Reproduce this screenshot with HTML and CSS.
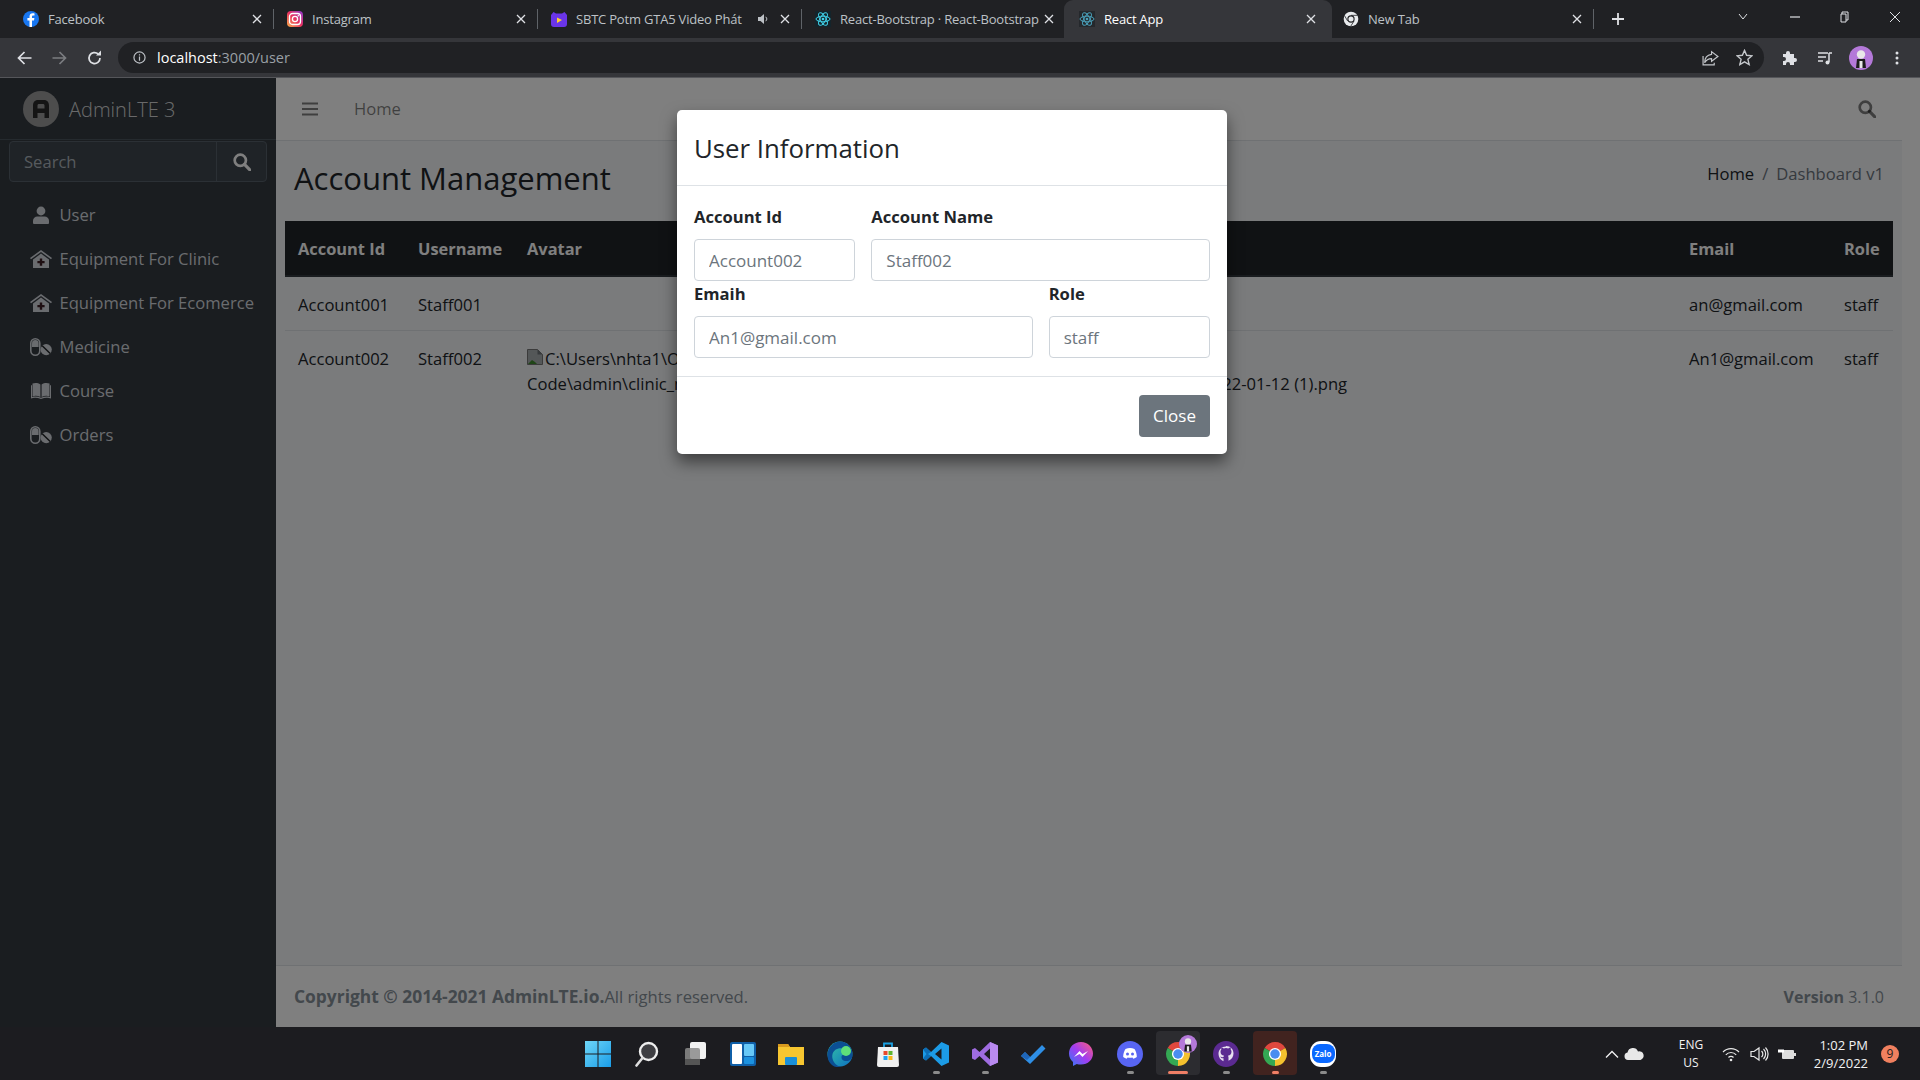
FILE: index.html
```html
<!DOCTYPE html>
<html lang="en">
<head>
    <meta charset="UTF-8">
    <title>React App</title>
    <link rel="stylesheet" href="styles.css">
</head>
<body>
    <svg class="defs" width="0" height="0">
        <defs>
            <symbol id="i-search" viewBox="0 0 16 16"><circle cx="6.5" cy="6.5" r="5" fill="none" stroke="currentColor" stroke-width="2.4"/><path d="M10.2 10.2 15 15" stroke="currentColor" stroke-width="2.8" stroke-linecap="round"/></symbol>
            <symbol id="i-user" viewBox="0 0 18 18"><circle cx="9" cy="5" r="4.4" fill="currentColor"/><path d="M1 17v-2.4C1 12 3 10.4 5.4 10.4h7.2c2.4 0 4.4 1.6 4.4 4.2V17a1 1 0 0 1-1 1H2a1 1 0 0 1-1-1z" fill="currentColor"/></symbol>
            <symbol id="i-clinic" viewBox="0 0 22 18"><path d="M11 0 0 8l1 1.3L11 2l10 7.3L22 8z" fill="currentColor"/><path d="M3 9.6 11 3.6l8 6V18H3z" fill="currentColor"/><path d="M9.8 8.5h2.4v2.4h2.4v2.4h-2.4v2.4H9.8v-2.4H7.4v-2.4h2.4z" fill="#3d1f24"/></symbol>
            <symbol id="i-pills" viewBox="0 0 22 18"><rect x="0.8" y="0.8" width="9" height="16.4" rx="4.5" fill="none" stroke="currentColor" stroke-width="1.6"/><path d="M2 9V5.4a3.3 3.3 0 0 1 6.6 0V9z" fill="currentColor"/><circle cx="16.2" cy="11.6" r="5.6" fill="currentColor"/><path d="M12.2 7.8l8 7.6" stroke="#1a1d20" stroke-width="1.4"/></symbol>
            <symbol id="i-book" viewBox="0 0 22 18"><path d="M2.5 1.5C5 .6 8 .8 10.4 2.4V15C8 13.6 5 13.4 2.5 14.3zM19.5 1.5C17 .6 14 .8 11.6 2.4V15c2.4-1.4 5.4-1.6 7.9-.7z" fill="currentColor"/><path d="M1 3.4v13c3-.8 6.4-.8 10 .6 3.6-1.4 7-1.4 10-.6v-13l-1-.4v12c-3-.8-6-.6-9 .8-3-1.4-6-1.6-9-.8V3z" fill="currentColor"/></symbol>
            <symbol id="i-atom" viewBox="0 0 24 24"><g fill="none" stroke="currentColor" stroke-width="1.5"><ellipse cx="12" cy="12" rx="10.5" ry="4.2"/><ellipse cx="12" cy="12" rx="10.5" ry="4.2" transform="rotate(60 12 12)"/><ellipse cx="12" cy="12" rx="10.5" ry="4.2" transform="rotate(120 12 12)"/></g><circle cx="12" cy="12" r="2" fill="currentColor"/></symbol>
            <symbol id="i-chrome" viewBox="0 0 24 24"><path d="M12 12 2.47 6.5A11 11 0 0 1 21.53 6.5z" fill="#e0483e"/><path d="M12 12 21.53 6.5A11 11 0 0 1 12 23z" fill="#f5c12e"/><path d="M12 12 12 23A11 11 0 0 1 2.47 6.5z" fill="#34a853"/><circle cx="12" cy="12" r="5.6" fill="#fff"/><circle cx="12" cy="12" r="4.4" fill="#4a8df0"/></symbol>
            <symbol id="i-avatar" viewBox="0 0 24 24"><circle cx="12" cy="12" r="12" fill="#b479d9"/><circle cx="12" cy="8.5" r="4.2" fill="#e8e8e8"/><path d="M8 13h8l1 9H7z" fill="#1c1c1c"/><path d="M10.5 15h3v7h-3z" fill="#e8e8e8"/></symbol>
            <symbol id="i-close" viewBox="0 0 10 10"><path d="M1 1l8 8M9 1 1 9" stroke="currentColor" stroke-width="1.3"/></symbol>
        </defs>
    </svg>

    <header class="chrome">
        <div class="tabstrip">
            <div class="tab">
                <svg class="favicon" viewBox="0 0 16 16"><circle cx="8" cy="8" r="8" fill="#1877f2"/><path d="M9 16V9.5h2l.4-2.4H9V5.8c0-.8.3-1.3 1.3-1.3h1.2V2.4C11 2.3 10.3 2.2 9.8 2.2 7.7 2.2 6.5 3.4 6.5 5.500v1.600H4.400v2.400h2.100V16z" fill="#fff"/></svg>
                <span class="tab-title">Facebook</span>
                <svg class="tab-x"><use href="#i-close"/></svg>
            </div>
            <div class="tab">
                <svg class="favicon" viewBox="0 0 16 16"><defs><linearGradient id="ig" x1="0" y1="1" x2="1" y2="0"><stop offset="0" stop-color="#fdb04a"/><stop offset=".5" stop-color="#e8305f"/><stop offset="1" stop-color="#8b3bd0"/></linearGradient></defs><rect width="16" height="16" rx="4" fill="url(#ig)"/><rect x="2.5" y="2.5" width="11" height="11" rx="3" fill="none" stroke="#fff" stroke-width="1.3"/><circle cx="8" cy="8" r="2.6" fill="none" stroke="#fff" stroke-width="1.3"/><circle cx="11.3" cy="4.7" r=".8" fill="#fff"/></svg>
                <span class="tab-title">Instagram</span>
                <svg class="tab-x"><use href="#i-close"/></svg>
            </div>
            <div class="tab">
                <svg class="favicon" viewBox="0 0 16 16"><path d="M2.5 1 5 2.5h6L13.5 1 16 4v9a3 3 0 0 1-3 3H3a3 3 0 0 1-3-3V4z" fill="#6a35e8"/><path d="M6 6.5 11 9l-5 3z" fill="#ffd02e"/></svg>
                <span class="tab-title">SBTC Potm GTA5 Video Phát</span>
                <svg class="tab-sound" viewBox="0 0 12 12"><path d="M1 4h2.5L7 1v10L3.5 8H1z" fill="currentColor"/><path d="M8.8 3.8a3 3 0 0 1 0 4.4" fill="none" stroke="currentColor"/></svg>
                <svg class="tab-x"><use href="#i-close"/></svg>
            </div>
            <div class="tab tab-nosep">
                <svg class="favicon atom-cyan"><use href="#i-atom"/></svg>
                <span class="tab-title">React-Bootstrap · React-Bootstrap</span>
                <svg class="tab-x"><use href="#i-close"/></svg>
            </div>
            <div class="tab tab-active">
                <svg class="favicon atom-dark"><use href="#i-atom"/></svg>
                <span class="tab-title">React App</span>
                <svg class="tab-x"><use href="#i-close"/></svg>
            </div>
            <div class="tab">
                <svg class="favicon newtab-icon" viewBox="0 0 24 24"><circle cx="12" cy="12" r="11" fill="#e8eaed"/><circle cx="12" cy="12" r="5.5" fill="#202124"/><circle cx="12" cy="12" r="3.8" fill="#e8eaed"/><path d="M12 6.5h10M7 15 2 6.5M16.5 15 11.5 23" stroke="#202124" stroke-width="1.2"/></svg>
                <span class="tab-title">New Tab</span>
                <svg class="tab-x"><use href="#i-close"/></svg>
            </div>
            <svg class="tab-plus" viewBox="0 0 12 12"><path d="M6 0v12M0 6h12" stroke="currentColor" stroke-width="1.8"/></svg>
            <div class="winctl">
                <svg class="winctl-btn" viewBox="0 0 50 12"><path d="M21 3l4 5 4-5" fill="none" stroke="currentColor"/></svg>
                <svg class="winctl-btn winctl-gap" viewBox="0 0 50 12"><path d="M20 6h10" stroke="currentColor" stroke-width="1.2"/></svg>
                <svg class="winctl-btn" viewBox="0 0 50 12"><path d="M22 3V1h6v8h-2M21 3h5v8h-5z" fill="none" stroke="currentColor"/></svg>
                <svg class="winctl-btn" viewBox="0 0 50 12"><path d="M20 1l10 10M30 1 20 11" stroke="currentColor"/></svg>
            </div>
        </div>
        <div class="toolbar">
            <svg class="tool" viewBox="0 0 16 16"><path d="M15 8H2M8 2 2 8l6 6" fill="none" stroke="currentColor" stroke-width="1.7"/></svg>
            <svg class="tool tool-off" viewBox="0 0 16 16"><path d="M1 8h13M8 2l6 6-6 6" fill="none" stroke="currentColor" stroke-width="1.7"/></svg>
            <svg class="tool" viewBox="0 0 16 16"><path d="M13.5 8A5.500 5.500 0 1 1 11.700 4" fill="none" stroke="currentColor" stroke-width="1.7"/><path d="M9.5 5.500H14.500V.5z" fill="currentColor"/></svg>
            <div class="omnibox">
                <svg class="omni-info" viewBox="0 0 14 14"><circle cx="7" cy="7" r="6" fill="none" stroke="currentColor" stroke-width="1.3"/><path d="M7 6v4.500M7 3.500v1.400" stroke="currentColor" stroke-width="1.3"/></svg>
                <span class="omni-url">localhost<span class="omni-path">:3000/user</span></span>
                <svg class="omni-btn" viewBox="0 0 16 16"><path d="M9 2.500 15 7l-6 4.500V9C6 9 4 10 2.500 13c0-4 2-7.500 6.500-8z" fill="none" stroke="currentColor" stroke-width="1.1"/><path d="M1 6.500V15h10.500v-2" fill="none" stroke="currentColor" stroke-width="1.1"/></svg>
                <svg class="omni-btn" viewBox="0 0 16 16"><path d="M8 1.300l2 4.600 5 .5-3.800 3.300 1.200 4.900L8 12.100l-4.400 2.500 1.200-4.900L1 6.400l5-.5z" fill="none" stroke="currentColor" stroke-width="1.3"/></svg>
            </div>
            <svg class="tool tool-ext" viewBox="0 0 16 16"><path d="M2 4h3V3a2 2 0 0 1 4 0v1h4v4h1a2 2 0 0 1 0 4h-1v3H9v-1a2 2 0 0 0-4 0v1H2v-4h1a2 2 0 0 0 0-4H2z" fill="currentColor"/></svg>
            <svg class="tool tool-ext" viewBox="0 0 16 16"><path d="M1 3h10M1 7h8M1 11h5" stroke="currentColor" stroke-width="1.5"/><path d="M12 3h3M12 3v9" stroke="currentColor" stroke-width="1.5"/><circle cx="10.5" cy="12.5" r="2" fill="currentColor"/></svg>
            <svg class="tool tool-ext tool-avatar"><use href="#i-avatar"/></svg>
            <svg class="tool tool-ext" viewBox="0 0 16 16"><circle cx="8" cy="3" r="1.5" fill="currentColor"/><circle cx="8" cy="8" r="1.5" fill="currentColor"/><circle cx="8" cy="13" r="1.5" fill="currentColor"/></svg>
        </div>
    </header>

    <div class="app">
        <aside class="sidebar">
            <div class="brand">
                <svg class="brand-logo" viewBox="0 0 36 36"><circle cx="18" cy="18" r="18" fill="#9a9a9a"/><path d="M10 27V14.500C10 10.500 12.500 9 15 9h6c2.500 0 5 1.500 5 5.500V27h-4.500v-5h-7v5zm4.500-9.500h7v-3c0-1-.7-1.500-1.500-1.500h-4c-.8 0-1.500.5-1.500 1.500z" fill="#2b2b2b"/></svg>
                <span class="brand-text">AdminLTE 3</span>
            </div>
            <div class="side-search">
                <input class="side-search-input" type="text" placeholder="Search">
                <div class="side-search-btn"><svg class="ic-16"><use href="#i-search"/></svg></div>
            </div>
            <nav class="side-nav">
                <a class="nav-item"><svg class="nav-ic nav-ic-user"><use href="#i-user"/></svg>User</a>
                <a class="nav-item"><svg class="nav-ic"><use href="#i-clinic"/></svg>Equipment For Clinic</a>
                <a class="nav-item"><svg class="nav-ic"><use href="#i-clinic"/></svg>Equipment For Ecomerce</a>
                <a class="nav-item"><svg class="nav-ic"><use href="#i-pills"/></svg>Medicine</a>
                <a class="nav-item"><svg class="nav-ic"><use href="#i-book"/></svg>Course</a>
                <a class="nav-item"><svg class="nav-ic"><use href="#i-pills"/></svg>Orders</a>
            </nav>
        </aside>

        <main class="main">
            <div class="topnav">
                <svg class="topnav-burger" viewBox="0 0 16 14"><path d="M0 1.5h16M0 7h16M0 12.5h16" stroke="currentColor" stroke-width="2"/></svg>
                <a class="topnav-link">Home</a>
                <svg class="topnav-search"><use href="#i-search"/></svg>
            </div>
            <div class="content-header">
                <h1 class="page-title">Account Management</h1>
                <div class="breadcrumb"><span class="crumb-link">Home</span><span class="crumb-sep">/</span><span>Dashboard v1</span></div>
            </div>
            <div class="table-wrap">
                <table class="accounts">
                    <colgroup>
                        <col class="col-id"><col class="col-name"><col class="col-avatar"><col class="col-email"><col class="col-role">
                    </colgroup>
                    <thead>
                        <tr><th>Account Id</th><th>Username</th><th>Avatar</th><th>Email</th><th>Role</th></tr>
                    </thead>
                    <tbody>
                        <tr><td>Account001</td><td>Staff001</td><td></td><td>an@gmail.com</td><td>staff</td></tr>
                        <tr>
                            <td>Account002</td><td>Staff002</td>
                            <td>
                                <svg class="broken" viewBox="0 0 16 16"><path d="M.5.5h10l5 5v10H.5z" fill="#a9aeb1" stroke="#777"/><path d="M1 15l4-4 3 2 2 2z" fill="#3f8a2e"/><path d="M10.5.5v5h5z" fill="#6f7478"/></svg>C:\Users\nhta1\OneDrive\Desktop\Final<br>Code\admin\clinic_management\clinic_frontend\public\images\avatar\staff\Screenshot 2022-01-12 (1).png
                            </td>
                            <td>An1@gmail.com</td><td>staff</td>
                        </tr>
                    </tbody>
                </table>
            </div>
            <footer class="footer">
                <div class="footer-copy"><strong>Copyright © 2014-2021 AdminLTE.io.</strong>All rights reserved.</div>
                <div><strong>Version</strong> 3.1.0</div>
            </footer>
        </main>

        <div class="backdrop">
            <div class="modal">
                <h2 class="modal-title">User Information</h2>
                <form class="modal-body">
                    <div class="field"><label class="field-label">Account Id</label><input class="field-input" type="text" value="Account002" readonly></div>
                    <div class="field field-wide"><label class="field-label">Account Name</label><input class="field-input" type="text" value="Staff002" readonly></div>
                    <div class="field field-wide"><label class="field-label">Emaih</label><input class="field-input" type="text" value="An1@gmail.com" readonly></div>
                    <div class="field"><label class="field-label">Role</label><input class="field-input" type="text" value="staff" readonly></div>
                </form>
                <div class="modal-footer"><button class="btn-close" type="button">Close</button></div>
            </div>
        </div>
    </div>

    <footer class="taskbar">
        <div class="pinned">
            <div class="pin"><svg class="pin-ic" viewBox="0 0 26 26"><defs><linearGradient id="win" x1="0" y1="0" x2="1" y2="1"><stop offset="0" stop-color="#6fd6f7"/><stop offset="1" stop-color="#1a9de8"/></linearGradient></defs><path d="M0 0h12.5v12.5H0zM13.5 0H26v12.5H13.5zM0 13.5h12.5V26H0zM13.5 13.5H26V26H13.5z" fill="url(#win)"/></svg></div>
            <div class="pin"><svg class="pin-ic" viewBox="0 0 26 26"><circle cx="15.5" cy="10.5" r="8.5" fill="#3e3e42" stroke="#eee" stroke-width="2.4"/><path d="M9.5 17 3.5 24.500" stroke="#ddd" stroke-width="2.6" stroke-linecap="round"/></svg></div>
            <div class="pin"><svg class="pin-ic" viewBox="0 0 26 26"><rect x="8" y="1" width="16" height="17" rx="2" fill="#f2f2f2"/><rect x="3" y="7" width="15" height="17" rx="2" fill="#8b8b8b" opacity=".85"/><rect x="3" y="18" width="15" height="6" fill="#555"/></svg></div>
            <div class="pin"><svg class="pin-ic" viewBox="0 0 26 26"><rect x="0" y="1" width="26" height="24" rx="2" fill="#0f5fa8"/><rect x="2" y="3" width="10" height="20" rx="1" fill="#fff"/><rect x="14" y="3" width="10" height="12" rx="1" fill="#67c8f7"/><rect x="14" y="16" width="10" height="7" rx="1" fill="#1c92e0"/></svg></div>
            <div class="pin"><svg class="pin-ic" viewBox="0 0 26 26"><path d="M0 3h10l2 3h14v18H0z" fill="#f7c630"/><path d="M0 3h10l2 3H0z" fill="#d89a1e"/><rect x="7" y="16" width="12" height="8" rx="1" fill="#1a8fd8"/></svg></div>
            <div class="pin"><svg class="pin-ic" viewBox="0 0 26 26"><defs><linearGradient id="edge" x1="0" y1="0" x2="1" y2="1"><stop offset="0" stop-color="#35c7a0"/><stop offset="1" stop-color="#0d6fc4"/></linearGradient></defs><circle cx="13" cy="13" r="12.5" fill="url(#edge)"/><path d="M25.5 14c0 4-3 6-6 6-4 0-5-2-5-4 0-1.5 1-2.5 3-2.500 2-4-2-7-6-6-5 1-7 6-6 10 1 5 5 8 10 8.500C7 28 0 22 .5 13 1 6 7 .5 13 .5 20 .5 25.500 6 25.500 14z" fill="#0b4f94"/><circle cx="19" cy="10" r="5" fill="#5fdf7a"/></svg></div>
            <div class="pin"><svg class="pin-ic" viewBox="0 0 26 26"><path d="M9 6V2.5h8V6" fill="none" stroke="#1ba1e2" stroke-width="1.8"/><path d="M3 6h20l1 18a2 2 0 0 1-2 2H4a2 2 0 0 1-2-2z" fill="#f1f1f1"/><path d="M8.5 10h4v4h-4z" fill="#e8492b"/><path d="M13.5 10h4v4h-4z" fill="#5fb52f"/><path d="M8.5 15h4v4h-4z" fill="#1da1f2"/><path d="M13.5 15h4v4h-4z" fill="#f9b81a"/></svg></div>
            <div class="pin pin-running"><svg class="pin-ic" viewBox="0 0 26 26"><path d="M18.5 1 26 4.500v17L18.500 25 8 15l-5 4.500-3-2V8.500l3-2L8 11zM18.500 7.500 12 13l6.500 5.500z" fill="#1c9be6"/><path d="M0 8.500 3 6.500 8 11l-3 2 3 2-5 4.500-3-2 3.500-4.500z" fill="#0c6db5"/></svg></div>
            <div class="pin pin-running"><svg class="pin-ic" viewBox="0 0 26 26"><path d="M18 1 26 4.500v17L18 25 7.500 15 3 19l-3-1.500v-9L3 7l4.500 4zM18 7.500 12 13l6 5.500z" fill="#9f6ce0"/><path d="M18 1 26 4.500v17L18 25z" fill="#b98af0"/></svg></div>
            <div class="pin"><svg class="pin-ic" viewBox="0 0 26 26"><path d="M1 15 5 11l5 5L22 4l3.500 3.500L10 23z" fill="#2f8fe6"/><path d="M1 15 5 11l5 5-3 3z" fill="#1f65b8"/></svg></div>
            <div class="pin"><svg class="pin-ic" viewBox="0 0 26 26"><defs><linearGradient id="msg" x1="0" y1="1" x2="1" y2="0"><stop offset="0" stop-color="#2f7cf6"/><stop offset=".5" stop-color="#a23cf0"/><stop offset="1" stop-color="#ff5f7a"/></linearGradient></defs><path d="M13 1C6 1 1 6 1 12.500c0 3.500 1.500 6.500 4 8.500v4l3.800-2c1.300.4 2.700.6 4.200.6 7 0 12-5 12-11.100S20 1 13 1z" fill="url(#msg)"/><path d="M6 16l5.500-6 3 3 5.500-3-5.500 6-3-3z" fill="#fff"/></svg></div>
            <div class="pin pin-running"><svg class="pin-ic" viewBox="0 0 26 26"><circle cx="13" cy="13" r="13" fill="#5865f2"/><path d="M8.500 8c3-1.200 6-1.200 9 0 1.500 2.400 2.300 5 2.300 8-1 .9-2.200 1.500-3.500 1.800l-.9-1.300c-1.600.4-3.200.4-4.800 0l-.9 1.300c-1.300-.3-2.500-.9-3.500-1.800 0-3 .8-5.600 2.300-8z" fill="#fff"/><circle cx="10.5" cy="13" r="1.5" fill="#5865f2"/><circle cx="15.5" cy="13" r="1.5" fill="#5865f2"/></svg></div>
            <div class="pin pin-box pin-open"><svg class="pin-ic"><use href="#i-chrome"/></svg><svg class="pin-badge"><use href="#i-avatar"/></svg></div>
            <div class="pin pin-running"><svg class="pin-ic" viewBox="0 0 26 26"><circle cx="13" cy="13" r="13" fill="#5b2a91"/><path d="M13 5.500c-4.500 0-7.500 3.200-7.500 7.500 0 3.300 2 6 5 7.200v-3c-1.600.3-2.600-.4-3.200-1.700 1 .2 1.800.9 3.200.6.100-.6.300-1 .6-1.300-2.300-.5-3.600-1.600-3.600-4 0-.9.300-1.600.8-2.200-.1-.6-.1-1.300.2-2 .8 0 1.600.3 2.200.8a7 7 0 0 1 4.600 0c.6-.5 1.400-.8 2.200-.8.300.7.300 1.400.2 2 .5.600.8 1.300.8 2.200 0 2.400-1.300 3.500-3.600 4 .4.400.6 1 .6 1.800v3.200c3-1.200 5-3.900 5-7.200 0-4.300-3-7.500-7.500-7.500z" fill="#e8e0f0"/></svg></div>
            <div class="pin pin-box pin-alert"><svg class="pin-ic"><use href="#i-chrome"/></svg></div>
            <div class="pin pin-running"><span class="zalo"><span class="zalo-bubble">Zalo</span></span></div>
        </div>
        <div class="tray">
            <svg class="tray-chevron" viewBox="0 0 22 12"><path d="M5 9.5 11 3.500l6 6" fill="none" stroke="currentColor" stroke-width="1.3"/></svg>
            <svg class="tray-cloud" viewBox="0 0 22 14"><path d="M5 13a3.800 3.800 0 0 1-.5-7.500A5.500 5.500 0 0 1 15 4.500a4.300 4.300 0 0 1 2.500 8.500z" fill="#e8e8e8"/></svg>
            <div class="tray-lang">ENG<br>US</div>
            <svg class="tray-ic" viewBox="0 0 20 16"><path d="M2 6a11 11 0 0 1 16 0M4.800 8.800a7 7 0 0 1 10.400 0M7.500 11.500a3.300 3.300 0 0 1 5 0" fill="none" stroke="currentColor" stroke-width="1.2"/><circle cx="10" cy="14" r="1.3" fill="currentColor"/></svg>
            <svg class="tray-ic" viewBox="0 0 20 16"><path d="M2 5.500h3l5-3.500v12L5 10.500H2z" fill="none" stroke="currentColor" stroke-width="1.2"/><path d="M12.500 5a4 4 0 0 1 0 6M14.500 3a7 7 0 0 1 0 10M16.500 1.500a9.500 9.500 0 0 1 0 13" fill="none" stroke="currentColor" stroke-width="1.2"/></svg>
            <svg class="tray-ic" viewBox="0 0 20 16"><rect x="5" y="4" width="12" height="9" rx="1" fill="#ddd"/><rect x="17" y="7" width="2" height="3" fill="#ddd"/><path d="M1 3.500h6v3H1z" fill="#fff"/></svg>
            <div class="tray-clock">1:02 PM<br>2/9/2022</div>
            <span class="tray-badge">9</span>
        </div>
    </footer>
</body>
</html>
```

FILE: styles.css
```css
* {
    box-sizing: border-box;
}
html, body {
    height: 100%;
}
body {
    margin: 0;
    display: flex;
    flex-direction: column;
    height: 1080px;
    overflow: hidden;
    font-family: "Open Sans", "Noto Sans", sans-serif;
    font-size: 16.6px;
    line-height: 24px;
    background: #fff;
    color: #212529;
}
.defs {
    position: absolute;
}

/* browser chrome */
.chrome {
    flex: none;
    background: #35363a;
    font-size: 13px;
}
.tabstrip {
    display: flex;
    align-items: stretch;
    height: 38px;
    padding-left: 10px;
    background: #202124;
    color: #bdc1c6;
}
.tab {
    position: relative;
    display: flex;
    align-items: center;
    width: 264px;
    padding: 0 12px 0 13px;
}
.tab::after {
    content: "";
    position: absolute;
    right: 0;
    top: 9px;
    width: 1px;
    height: 20px;
    background: #5f6368;
}
.tab-nosep::after,
.tab-active::after {
    display: none;
}
.tab-active {
    margin: 0 -2px;
    width: 268px;
    padding-left: 15px;
    padding-right: 16px;
    background: #35363a;
    border-radius: 9px 9px 0 0;
    color: #fff;
}
.favicon {
    flex: none;
    width: 16px;
    height: 16px;
    margin-right: 9px;
}
.atom-cyan {
    color: #41d1e8;
    background: #14242b;
}
.atom-dark {
    color: #4a9fb8;
    background: #25282c;
}
.tab-title {
    flex: 1;
    white-space: nowrap;
    overflow: hidden;
    letter-spacing: -0.2px;
}
.tab-x {
    flex: none;
    width: 10px;
    height: 10px;
    margin-left: 5px;
    color: #dfe1e5;
}
.tab-sound {
    flex: none;
    width: 12px;
    height: 12px;
    margin-left: 4px;
    margin-right: 6px;
    color: #bdc1c6;
}
.tab-plus {
    flex: none;
    align-self: center;
    width: 12px;
    height: 12px;
    margin-left: 18px;
    color: #dfe1e5;
}
.winctl {
    display: flex;
    margin-left: auto;
    color: #dfe1e5;
}
.winctl-btn {
    width: 50px;
    height: 12px;
    margin-top: 11px;
}
.winctl-gap {
    margin-left: 2px;
}
.toolbar {
    display: flex;
    align-items: center;
    height: 40px;
    padding: 0 5px 0 7px;
    border-bottom: 1px solid #55565a;
    color: #dfe1e5;
}
.tool {
    flex: none;
    width: 35px;
    height: 16px;
}
.tool-off {
    color: #7b7d80;
}
.tool-ext {
    width: 36px;
}
.tool-avatar {
    height: 24px;
}
.omnibox {
    flex: 1;
    display: flex;
    align-items: center;
    height: 31px;
    margin: 0 7px 0 6px;
    padding: 0 11px 0 15px;
    border-radius: 16px;
    background: #202124;
}
.omni-info {
    width: 13px;
    height: 13px;
    margin-right: 11px;
    color: #bdc1c6;
}
.omni-url {
    flex: 1;
    font-size: 14.5px;
    color: #fff;
}
.omni-path {
    color: #9aa0a6;
}
.omni-btn {
    width: 17px;
    height: 17px;
    margin-left: 17px;
    color: #c4c7cb;
}

/* app frame */
.app {
    position: relative;
    flex: 1;
    display: flex;
    min-height: 0;
    padding-right: 18px;
    background: #fff;
}
.sidebar {
    flex: none;
    width: 276px;
    background: #343a40;
    color: #d4d8de;
}
.brand {
    display: flex;
    align-items: center;
    height: 62px;
    padding-left: 23px;
    border-bottom: 1px solid #4b545c;
}
.brand-logo {
    width: 36px;
    height: 36px;
    margin-right: 10px;
}
.brand-text {
    padding-top: 2px;
    font-size: 20px;
    font-weight: 300;
    color: rgba(255, 255, 255, 0.8);
}
.side-search {
    display: flex;
    height: 41px;
    margin: 1px 9px 0;
    border: 1px solid #56606a;
    border-radius: 4px;
    background: #3f474e;
}
.side-search-input {
    flex: 1;
    min-width: 0;
    padding: 0 14px;
    border: none;
    background: none;
    font: inherit;
    color: #fff;
}
.side-search-input::placeholder {
    color: #adb5bd;
}
.side-search-btn {
    flex: none;
    display: flex;
    align-items: center;
    justify-content: center;
    width: 50px;
    border-left: 1px solid #56606a;
    color: #fff;
}
.ic-16 {
    width: 18px;
    height: 18px;
}
.side-nav {
    display: flex;
    flex-direction: column;
    padding-top: 10.5px;
}
.nav-item {
    display: flex;
    align-items: center;
    height: 44px;
    padding-left: 30px;
    white-space: nowrap;
}
.nav-ic {
    flex: none;
    width: 22px;
    height: 18px;
    margin-right: 7.5px;
}
.nav-ic-user {
    width: 18px;
    margin: 0 9.5px 0 2px;
}

/* main column */
.main {
    flex: 1;
    min-width: 0;
    display: flex;
    flex-direction: column;
    background: #f4f6f9;
}
.topnav {
    flex: none;
    display: flex;
    align-items: center;
    height: 63px;
    padding: 0 12px 0 26px;
    border-bottom: 1px solid #dee2e6;
    background: #fff;
    color: rgba(0, 0, 0, 0.5);
}
.topnav-burger {
    width: 16px;
    height: 14px;
}
.topnav-link {
    margin-left: 36px;
}
.topnav-search {
    width: 18px;
    height: 18px;
    margin-left: auto;
    margin-right: 14px;
}
.content-header {
    flex: none;
    display: flex;
    justify-content: space-between;
    height: 80px;
    padding: 15px 18px 0;
}
.page-title {
    margin: 0;
    font-size: 31px;
    line-height: 44px;
    font-weight: 500;
}
.breadcrumb {
    margin-top: 6px;
    color: #6c757d;
}
.crumb-link {
    color: #212529;
}
.crumb-sep {
    margin: 0 8px;
}
.table-wrap {
    flex: 1;
    padding: 0 9px;
}
.accounts {
    width: 100%;
    table-layout: fixed;
    border-collapse: collapse;
}
.col-id { width: 120px; }
.col-name { width: 109px; }
.col-email { width: 155px; }
.col-role { width: 62px; }
.accounts th {
    height: 55px;
    padding: 2px 13px 0;
    text-align: left;
    font-size: 16.4px;
    font-weight: 700;
    background: #212529;
    color: #fff;
    border-bottom: 2px solid #32383e;
}
.accounts td {
    padding: 15px 13px 13px;
    vertical-align: top;
    border-bottom: 1px solid #dee2e6;
    line-height: 25px;
}
.accounts tr:last-child td {
    border-bottom: none;
}
.broken {
    width: 16px;
    height: 16px;
    margin-right: 2px;
}
.footer {
    flex: none;
    display: flex;
    justify-content: space-between;
    height: 62px;
    padding: 0 18px;
    align-items: center;
    border-top: 1px solid #dee2e6;
    background: #fff;
    color: #869099;
    font-size: 16px;
}
.footer-copy {
    font-size: 16.6px;
}
.footer-copy strong {
    font-size: 17.4px;
}

/* modal */
.backdrop {
    position: absolute;
    inset: 0;
    display: flex;
    justify-content: center;
    align-items: flex-start;
    padding: 32px 16px 0 0;
    background: rgba(0, 0, 0, 0.5);
}
.modal {
    width: 550px;
    border-radius: 5px;
    background: #fff;
    box-shadow: 0 8px 16px rgba(0, 0, 0, 0.5);
}
.modal-title {
    margin: 0;
    height: 76px;
    padding: 0 17px;
    font-size: 25.8px;
    line-height: 76px;
    font-weight: 500;
    border-bottom: 1px solid #dee2e6;
}
.modal-body {
    display: grid;
    grid-template-columns: repeat(3, 1fr);
    gap: 1px 16px;
    padding: 19px 17px 18px;
}
.field-wide {
    grid-column: span 2;
}
.field-label {
    display: block;
    margin-bottom: 10px;
    font-weight: 700;
}
.field-input {
    display: block;
    width: 100%;
    height: 42px;
    padding: 0 14px;
    border: 1px solid #ced4da;
    border-radius: 4px;
    font: inherit;
    font-size: 17px;
    color: #6c757d;
    outline: none;
}
.modal-footer {
    display: flex;
    justify-content: flex-end;
    padding: 18px 17px 17px;
    border-top: 1px solid #dee2e6;
}
.btn-close {
    width: 71px;
    height: 42px;
    border: none;
    border-radius: 4px;
    font: inherit;
    font-size: 17px;
    background: #6c757d;
    color: #fff;
}

/* windows taskbar */
.taskbar {
    flex: none;
    display: flex;
    align-items: center;
    height: 53px;
    padding-left: 574px;
    background: #1c1c20;
    color: #f2f2f2;
    font-size: 12px;
    line-height: 18px;
}
.pinned {
    display: flex;
}
.pin {
    position: relative;
    display: flex;
    align-items: center;
    justify-content: center;
    width: 48.33px;
    height: 53px;
}
.pin-ic {
    width: 26px;
    height: 26px;
}
.pin-running::after,
.pin-open::after,
.pin-alert::after {
    content: "";
    position: absolute;
    left: 21px;
    bottom: 6px;
    width: 7px;
    height: 3px;
    border-radius: 2px;
    background: #8b8b8b;
}
.pin-open::before,
.pin-alert::before {
    content: "";
    position: absolute;
    left: 2px;
    right: 2px;
    top: 4px;
    bottom: 5px;
    border-radius: 4px;
    background: #2c2c30;
}
.pin-alert::before {
    background: #41231f;
}
.pin-box .pin-ic {
    position: relative;
}
.pin-open::after {
    left: 14px;
    width: 20px;
    background: #f07f66;
}
.pin-alert::after {
    background: #f07f66;
}
.pin-badge {
    position: absolute;
    left: 25px;
    top: 8px;
    width: 18px;
    height: 18px;
}
.zalo {
    display: flex;
    align-items: center;
    justify-content: center;
    width: 26px;
    height: 26px;
    border-radius: 11px;
    background: #fff;
}
.zalo-bubble {
    width: 23px;
    height: 19px;
    border-radius: 8px;
    background: #0a68ff;
    color: #fff;
    font-size: 8px;
    line-height: 19px;
    text-align: center;
    font-weight: 700;
}
.tray {
    display: flex;
    align-items: center;
    margin-left: auto;
    padding-right: 21px;
}
.tray-chevron {
    width: 22px;
    height: 12px;
}
.tray-cloud {
    width: 22px;
    height: 14px;
    margin-right: 26px;
}
.tray-lang {
    width: 40px;
    margin-right: 6px;
    text-align: center;
}
.tray-ic {
    width: 28px;
    height: 16px;
    color: #e8e8e8;
}
.tray-clock {
    width: 67px;
    font-size: 13px;
    text-align: right;
}
.tray-badge {
    width: 18px;
    height: 18px;
    margin-left: 13px;
    border-radius: 50%;
    background: #f0805f;
    color: #1c1c1c;
    line-height: 18px;
    text-align: center;
}
```
